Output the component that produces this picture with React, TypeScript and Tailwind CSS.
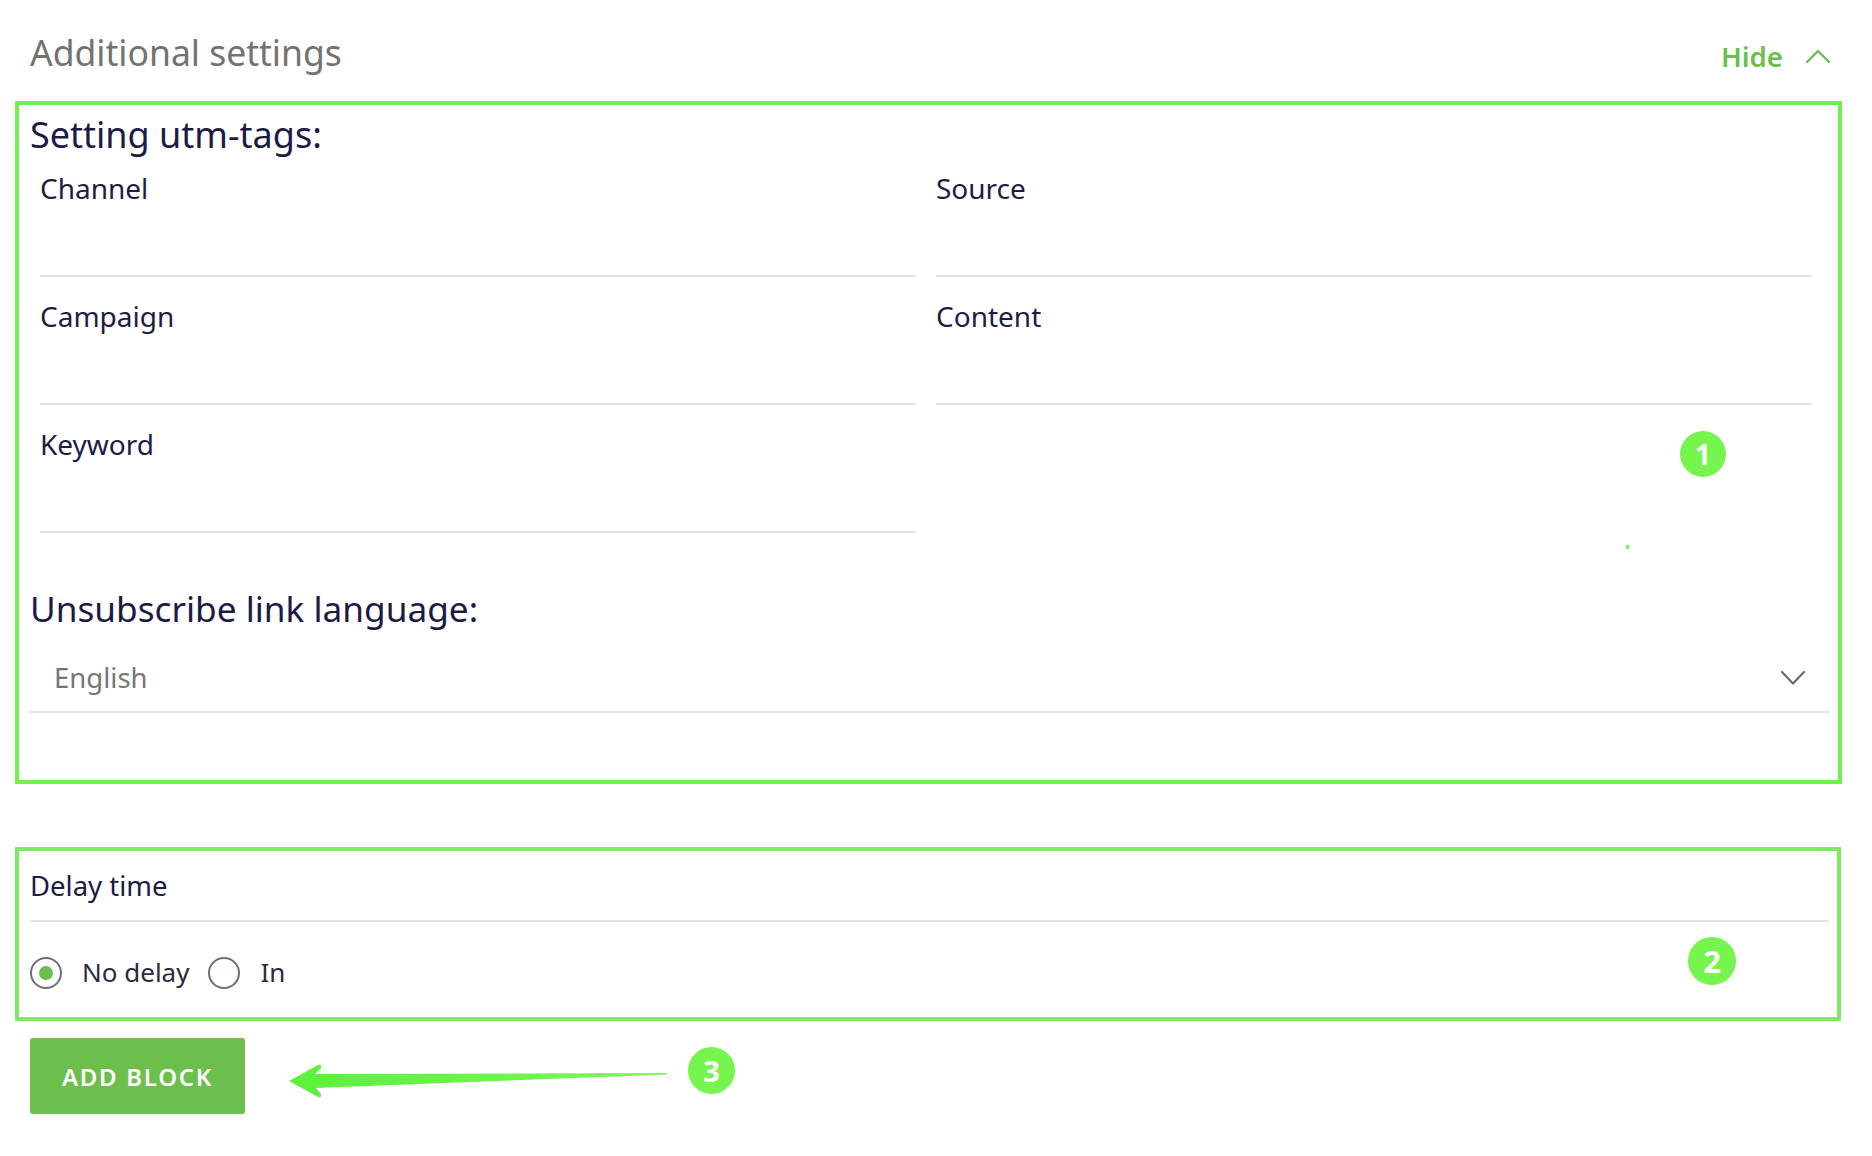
import React from "react";

const FONT = "font-['Noto_Sans','Lato',sans-serif]";

function Field({ label }: { label: string }) {
  return (
    <div>
      <div className="pt-[25px] text-[28px] leading-[28px] text-[#1d1d45]">{label}</div>
      <div className="h-[75px] border-b-2 border-[#e2e2e2]" />
    </div>
  );
}

function Badge({ n, className }: { n: string; className?: string }) {
  return (
    <div
      className={`flex items-center justify-center rounded-full bg-[#77f54f] font-bold text-white ${className ?? ""}`}
    >
      {n}
    </div>
  );
}

function Radio({ checked }: { checked?: boolean }) {
  return (
    <span className="flex h-8 w-8 items-center justify-center rounded-full border-2 border-[#6d6d80]">
      {checked && <span className="h-[14px] w-[14px] rounded-full bg-[#6cbf4d]" />}
    </span>
  );
}

export default function App() {
  return (
    <div className={`h-[1156px] w-[1872px] overflow-hidden bg-white ${FONT}`}>
      <header className="flex h-[101px] justify-between pl-[30px] pr-[42px]">
        <h2 className="pt-[30px] text-[35.5px] leading-[44px] text-[#727272]">Additional settings</h2>
        <button className="mt-[40px] flex h-8 items-start gap-[23px] text-[27.6px] font-semibold leading-8 text-[#6cbf4d]">
          Hide
          <svg width="24" height="14" viewBox="0 0 24 14" fill="none" className="mt-[9px]">
            <path d="M1 13 L12 2 L23 13" stroke="#6cbf4d" strokeWidth="2.4" strokeLinecap="round" strokeLinejoin="round" />
          </svg>
        </button>
      </header>

      <section className="relative ml-[15px] h-[683px] w-[1827px] border-4 border-[#72f04f] px-[11px]">
        <h3 className="mt-[16px] text-[36px] leading-[28px] text-[#1b1b45]">Setting utm-tags:</h3>
        <div className="ml-[10px] grid w-[1772px] grid-cols-[876px_876px] gap-x-[20px]">
          <Field label="Channel" />
          <Field label="Source" />
          <Field label="Campaign" />
          <Field label="Content" />
          <Field label="Keyword" />
        </div>
        <h3 className="mt-[59px] text-[35.2px] leading-[32px] text-[#1b1b45]">Unsubscribe link language:</h3>
        <div className="flex h-[89px] w-[1800px] items-center justify-between border-b-2 border-[#e4e4e4] pl-[24px] pr-[25px] pt-[21px]">
          <span className="text-[27.5px] leading-8 text-[#767676]">English</span>
          <svg width="24" height="14" viewBox="0 0 24 14" fill="none">
            <path d="M1 1 L12 12.5 L23 1" stroke="#666" strokeWidth="2" strokeLinecap="round" strokeLinejoin="round" />
          </svg>
        </div>
        <Badge n="1" className="absolute left-[1661px] top-[326px] h-[46px] w-[46px] text-[28px]" />
        <span className="absolute left-[1607px] top-[440px] h-1 w-[3px] bg-[#77f54f]" />
      </section>

      <section className="relative ml-[15px] mt-[63px] h-[174px] w-[1826px] border-4 border-[#7aec5e] px-[11px]">
        <div className="pt-[21px] pb-[1px] text-[27.5px] leading-[28px] text-[#1b1b45]">Delay time</div>
        <div className="mt-[19px] h-[2px] w-[1799px] bg-[#e4e4e4]" />
        <div className="mt-[35px] flex items-center text-[26px] leading-8 text-[#2b2b40]">
          <Radio checked />
          <span className="ml-[20px] mr-[19px] -mt-[3px]">No delay</span>
          <Radio />
          <span className="ml-[20px] -mt-[3px]">In</span>
        </div>
        <Badge n="2" className="absolute left-[1669px] top-[86px] h-[48px] w-[48px] text-[31px]" />
      </section>

      <div className="ml-[30px] mt-[17px] flex items-start">
        <button className="flex h-[76px] w-[215px] items-center justify-center rounded-[3px] bg-[#6cbf4d] pt-[2px] text-[24px] font-semibold tracking-[1.7px] text-white">
          ADD BLOCK
        </button>
        <svg width="378" height="34" viewBox="0 0 378 34" className="ml-[44px] mt-[26px]">
          <defs>
            <linearGradient id="arrow" x1="0" x2="1" y1="0" y2="0">
              <stop offset="0" stopColor="#5cf03c" />
              <stop offset="1" stopColor="#7bf75a" />
            </linearGradient>
          </defs>
          <path
            d="M0 17 L29 1 Q33 0 32 4 L26 10 L378 9 L378 10.5 L27 24 L32 30 Q33 34 29 33 Z"
            fill="url(#arrow)"
          />
        </svg>
        <Badge n="3" className="ml-[21px] mt-[9px] h-[47px] w-[47px] text-[29px]" />
      </div>
    </div>
  );
}
